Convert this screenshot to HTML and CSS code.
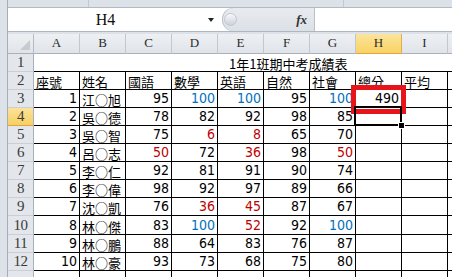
FILE: index.html
```html
<!DOCTYPE html>
<html lang="zh-Hant">
<head>
    <meta charset="UTF-8" />
    <title>1年1班期中考成績表</title>
    <link rel="stylesheet" href="styles.css">
</head>
<body>
<div class="window">
    <div class="content">
        <div class="ribbon-edge">
            <span class="rib-a"></span>
            <span class="rib-b"></span>
        </div>
        <div class="formula-bar">
            <div class="name-box">
                <span class="name">H4</span>
                <span class="drop"><i class="arrow"></i></span>
            </div>
            <div class="fx-area">
                <span class="grip"></span>
                <span class="fx">fx</span>
            </div>
            <div class="formula-input"></div>
        </div>
        <div class="sheet" id="sheet">
            <!-- cells are built below -->
            <div class="red-box"></div>
            <div class="active-cell"></div>
            <div class="fill-handle"></div>
        </div>
    </div>
</div>
<script>
    const cols = ['A', 'B', 'C', 'D', 'E', 'F', 'G', 'H', 'I', ''];
    const heads = ['座號', '姓名', '國語', '數學', '英語', '自然', '社會', '總分', '平均', ''];
    const rows = [
        [1, '江○旭', 95, 100, 100, 95, 100, 490],
        [2, '吳○德', 78, 82, 92, 98, 85],
        [3, '吳○智', 75, 6, 8, 65, 70],
        [4, '呂○志', 50, 72, 36, 98, 50],
        [5, '李○仁', 92, 81, 91, 90, 74],
        [6, '李○偉', 98, 92, 97, 89, 66],
        [7, '沈○凱', 76, 36, 45, 87, 67],
        [8, '林○傑', 83, 100, 52, 92, 100],
        [9, '林○鵬', 88, 64, 83, 76, 87],
        [10, '林○豪', 93, 73, 68, 75, 80]
    ];
    const sheet = document.getElementById('sheet');
    const overlay = sheet.firstElementChild;

    function add(cls, text) {
        const d = document.createElement('div');
        d.className = cls;
        if (text !== undefined && text !== '') d.textContent = text;
        sheet.insertBefore(d, overlay);
        return d;
    }

    add('corner');
    cols.forEach(c => add('col-head' + (c === 'H' ? ' sel' : ''), c));

    // row 1: merged title
    add('row-head', 1);
    add('title', '1年1班期中考成績表');

    // row 2: headings
    add('row-head', 2);
    heads.forEach(h => add('cell', h));

    // rows 3 - 13 (13 is cut by the window edge)
    for (let r = 0; r < 11; r++) {
        const data = rows[r] || [];
        add('row-head' + (r === 1 ? ' sel' : ''), r < 10 ? r + 3 : '');
        for (let c = 0; c < cols.length; c++) {
            const v = data[c];
            let cls = 'cell';
            if (typeof v === 'number') {
                cls += ' num';
                if (c >= 2 && c <= 6) {
                    if (v < 60) cls += ' low';
                    if (v === 100) cls += ' full';
                }
            }
            add(cls, v === undefined ? '' : v);
        }
    }
</script>
</body>
</html>
```

FILE: styles.css
```css
body {
    margin: 0;
    background: #fff;
}
.window {
    width: 452px;
    height: 277px;
    overflow: hidden;
    background: #dde2e8;
    padding-left: 7px;
    box-sizing: border-box;
}
.content {
    border-left: 1px solid #a4adb9;
    height: 100%;
    display: flex;
    flex-direction: column;
    overflow: hidden;
}
.ribbon-edge {
    height: 7px;
    flex-shrink: 0;
    display: flex;
    border-bottom: 1px solid #b3bac4;
}
.rib-a {
    width: 80px;
    border-right: 1px solid #c3c9d1;
}
.rib-b {
    width: 254px;
    border-right: 1px solid #c3c9d1;
}
.formula-bar {
    height: 23px;
    flex-shrink: 0;
    display: flex;
    background: #fff;
    border-bottom: 1px solid #aeb6c0;
    margin-bottom: 2px;
}
.name-box {
    width: 214px;
    display: flex;
    align-items: center;
}
.name {
    flex: 1;
    text-align: center;
    font-family: "Liberation Serif", serif;
    font-size: 16px;
    color: #111;
}
.drop {
    width: 19px;
    display: flex;
    justify-content: center;
}
.arrow {
    width: 0;
    height: 0;
    border-left: 3px solid transparent;
    border-right: 3px solid transparent;
    border-top: 4px solid #222;
    margin-right: 4px;
}
.fx-area {
    width: 92px;
    display: flex;
    align-items: center;
    background: linear-gradient(#e8ebef, #dce1e7);
    border-radius: 11px 0 0 11px;
    box-shadow: inset 1px 0 0 #bcc3cc;
}
.grip {
    width: 11px;
    height: 11px;
    margin-left: 2px;
    border-radius: 50%;
    background: linear-gradient(#f7f8fa, #cdd2d9);
    border: 1px solid #c1c7cf;
}
.fx {
    margin-left: auto;
    margin-right: 7px;
    font-family: "Liberation Serif", serif;
    font-style: italic;
    font-weight: 700;
    font-size: 13px;
    color: #333;
}
.formula-input {
    flex: 1;
    background: #fff;
    border-left: 1px solid #b8c0ca;
}
.sheet {
    position: relative;
    flex: 1;
    background: #fff;
    display: grid;
    grid-template-columns: 26px repeat(9, 46px) 5px;
    grid-template-rows: 19.5px repeat(13, 18.12px);
    overflow: hidden;
}
.corner {
    position: relative;
    background: linear-gradient(#eef0f3, #e0e4e9);
    border-right: 1px solid #b4bcc6;
    border-bottom: 1px solid #a9b1bc;
}
.corner::after {
    content: "";
    position: absolute;
    right: 3px;
    bottom: 3px;
    border-left: 10px solid transparent;
    border-bottom: 10px solid #c6cbd2;
}
.col-head {
    display: flex;
    align-items: center;
    justify-content: center;
    background: linear-gradient(#eef0f3, #e0e4e9);
    border-right: 1px solid #c2c8d0;
    border-bottom: 1px solid #a9b1bc;
    font-family: "Liberation Serif", serif;
    font-size: 13px;
    color: #2b2b2b;
}
.col-head.sel {
    background: linear-gradient(#fbe49b, #f8d264);
    border-right-color: #e2ad4c;
    border-bottom-color: #e0a441;
}
.row-head {
    display: flex;
    align-items: center;
    justify-content: center;
    background: #e3e7ec;
    border-right: 1px solid #a9b1bc;
    border-bottom: 1px solid #c9cfd7;
    font-family: "Liberation Serif", serif;
    font-size: 15px;
    letter-spacing: -0.5px;
    color: #3a3a3a;
}
.row-head.sel {
    background: linear-gradient(#fbe29a, #f8d062);
    border-bottom-color: #e0a441;
}
.title {
    grid-column: 2 / -1;
    display: flex;
    align-items: flex-end;
    padding: 0 0 1px 195px;
    border-bottom: 1px solid #000;
    font-family: "Noto Sans CJK TC", sans-serif;
    font-size: 13px;
    line-height: 1;
    color: #000;
    white-space: nowrap;
}
.cell {
    display: flex;
    align-items: flex-end;
    padding: 0 2px 1px 2px;
    border-right: 1px solid #000;
    border-bottom: 1px solid #000;
    font-family: "Noto Sans CJK TC", sans-serif;
    font-size: 13px;
    line-height: 1;
    color: #000;
    white-space: nowrap;
    overflow: hidden;
}
.num {
    justify-content: flex-end;
    font-family: "Liberation Sans Narrow", "DejaVu Sans Condensed", sans-serif;
    font-size: 14px;
    padding-bottom: 2px;
}
.low {
    color: #c00000;
}
.full {
    color: #0070c0;
}
.red-box {
    position: absolute;
    left: 343px;
    top: 51px;
    width: 55px;
    height: 29px;
    box-sizing: border-box;
    border: 5px solid #e8141c;
}
.active-cell {
    position: absolute;
    left: 346px;
    top: 72px;
    width: 48px;
    height: 20px;
    box-sizing: border-box;
    border: 2px solid #000;
}
.fill-handle {
    position: absolute;
    left: 390px;
    top: 88px;
    width: 5px;
    height: 5px;
    background: #000;
    border: 1px solid #fff;
}
```
